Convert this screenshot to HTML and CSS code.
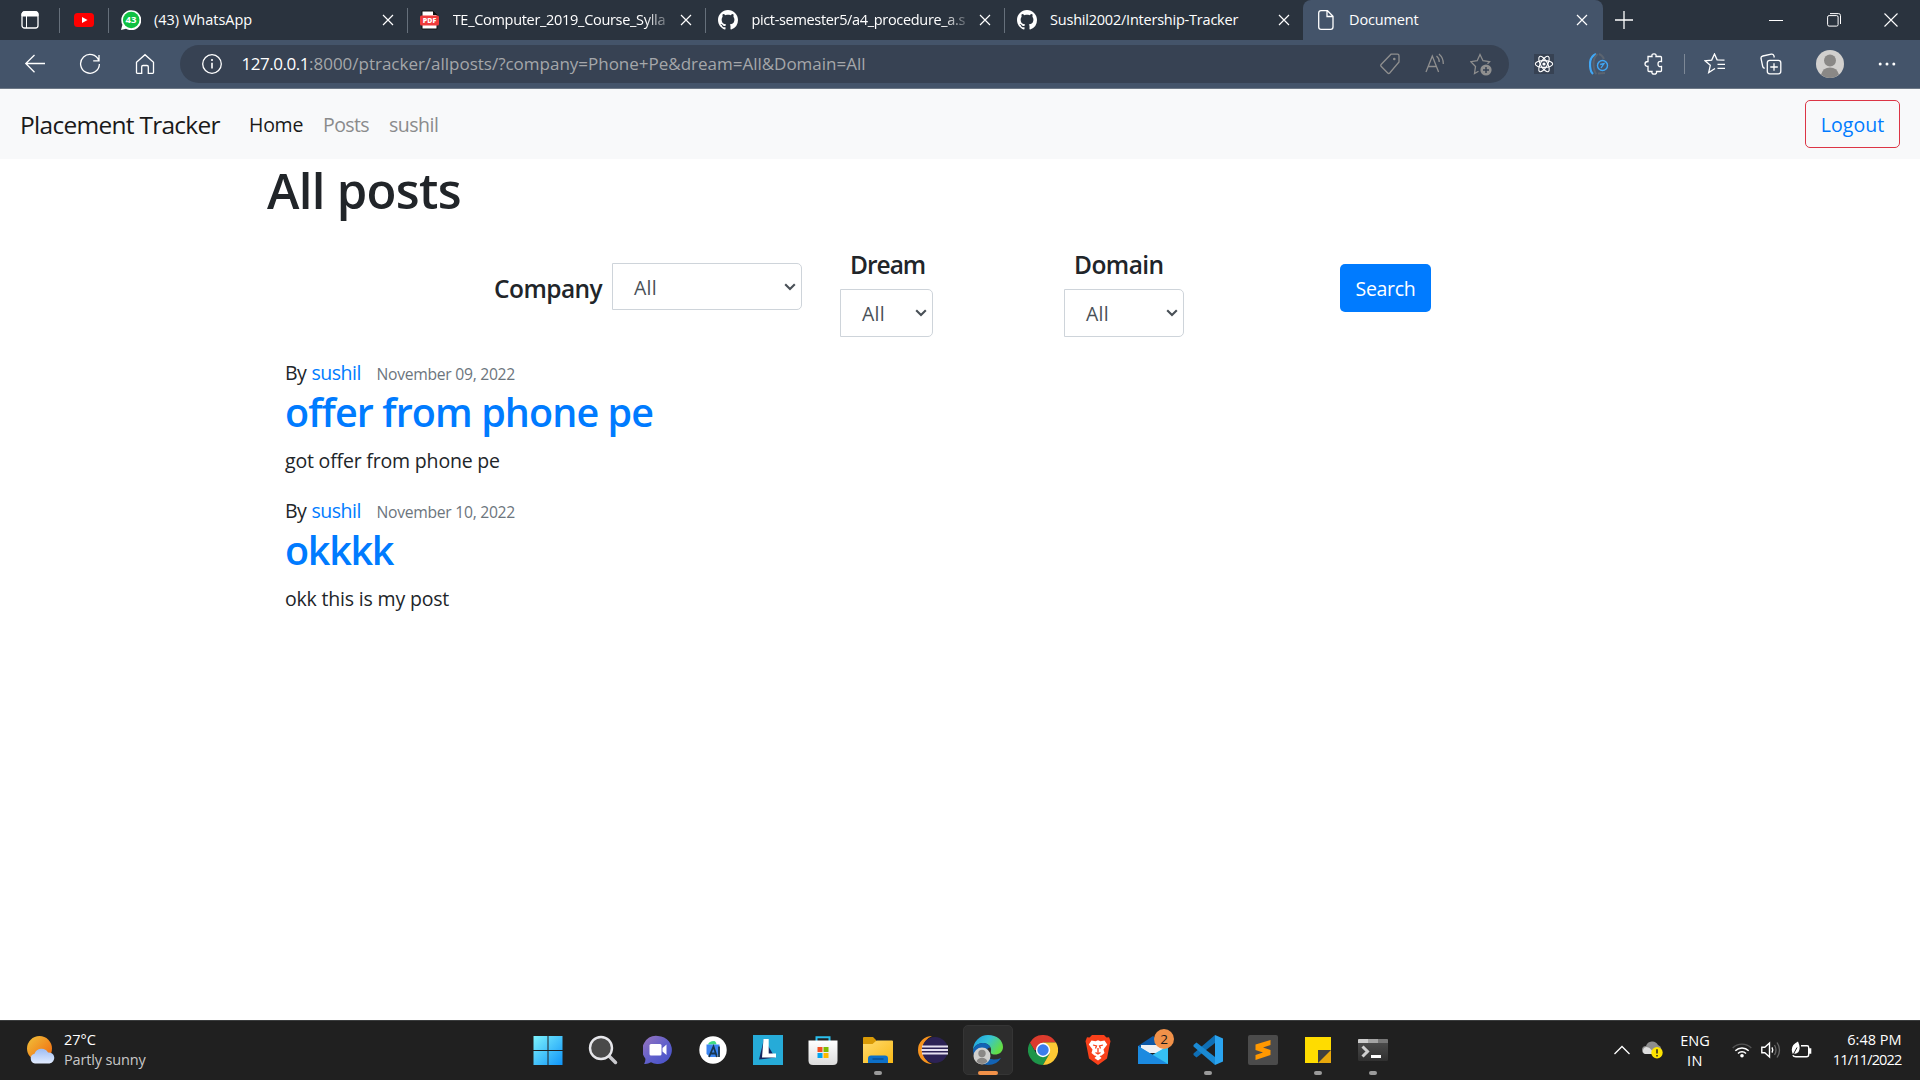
FILE: index.html
```html
<!DOCTYPE html>
<html lang="en">
<head>
<meta charset="utf-8">
<title>Document</title>
<link rel="stylesheet" href="styles.css">
</head>
<body>
<svg width="0" height="0" class="defs">
  <defs>
    <symbol id="x" viewBox="0 0 12 12"><path d="M1 1l10 10M11 1L1 11" stroke="#fff" stroke-width="1.2" fill="none"/></symbol>
    <symbol id="gh" viewBox="0 0 16 16"><path fill="#fff" d="M8 0C3.58 0 0 3.58 0 8c0 3.54 2.29 6.53 5.47 7.59.4.07.55-.17.55-.38 0-.19-.01-.82-.01-1.49-2.01.37-2.53-.49-2.69-.94-.09-.23-.48-.94-.82-1.13-.28-.15-.68-.52-.01-.53.63-.01 1.08.58 1.23.82.72 1.21 1.87.87 2.33.66.07-.52.28-.87.51-1.07-1.78-.2-3.64-.89-3.64-3.95 0-.87.31-1.59.82-2.15-.08-.2-.36-1.02.08-2.12 0 0 .67-.21 2.2.82.64-.18 1.32-.27 2-.27s1.36.09 2 .27c1.53-1.04 2.2-.82 2.2-.82.44 1.1.16 1.92.08 2.12.51.56.82 1.27.82 2.15 0 3.07-1.87 3.75-3.65 3.95.29.25.54.73.54 1.48 0 1.07-.01 1.93-.01 2.2 0 .21.15.46.55.38A8.01 8.01 0 0 0 16 8c0-4.42-3.58-8-8-8z"/></symbol>
    <symbol id="chev" viewBox="0 0 12 8"><path d="M1.2 1.2L6 6l4.800-4.800" stroke="#495057" stroke-width="2.100" fill="none"/></symbol>
    <linearGradient id="win" x1="0" y1="0" x2="1" y2="1"><stop offset="0" stop-color="#7df3fd"/><stop offset="1" stop-color="#0f94f8"/></linearGradient>
    <linearGradient id="sun" x1="0" y1="0" x2="1" y2="1"><stop offset="0" stop-color="#f0c23a"/><stop offset="1" stop-color="#f1620c"/></linearGradient>
    <linearGradient id="cloud" x1="0" y1="0" x2="0" y2="1"><stop offset="0" stop-color="#9dbcf2"/><stop offset="1" stop-color="#e2ecff"/></linearGradient>
    <linearGradient id="chat" x1="0" y1="0" x2="1" y2="1"><stop offset="0" stop-color="#9a75bd"/><stop offset=".55" stop-color="#5f5fcb"/><stop offset="1" stop-color="#4450c8"/></linearGradient>
    <linearGradient id="fold" x1="0" y1="0" x2="1" y2="1"><stop offset="0" stop-color="#ffda6c"/><stop offset="1" stop-color="#f9b916"/></linearGradient>
    <linearGradient id="edge" x1="0" y1="0" x2="1" y2=".5"><stop offset="0" stop-color="#1a9be0"/><stop offset=".5" stop-color="#35c3d8"/><stop offset="1" stop-color="#63dd45"/></linearGradient>
    <linearGradient id="bag" x1="0" y1="0" x2="0" y2="1"><stop offset="0" stop-color="#fff"/><stop offset="1" stop-color="#dcdcdc"/></linearGradient>
    <linearGradient id="term" x1="0" y1="0" x2="0" y2="1"><stop offset="0" stop-color="#505050"/><stop offset="1" stop-color="#303030"/></linearGradient>
  </defs>
</svg>

<header class="tabs">
  <div class="cell workspace"><svg width="20" height="20" viewBox="0 0 20 20"><rect x="2" y="2" width="16" height="16" rx="2.500" fill="none" stroke="#fff" stroke-width="1.300"/><path d="M2 6V4q0-2.500 2.500-2.500h11Q18 1.500 18 4v2zM6.500 6v12" fill="#fff" stroke="#fff"/></svg></div>
  <div class="cell pinned"><svg width="20" height="14" viewBox="0 0 20 14"><rect width="20" height="14" rx="3.500" fill="#f00"/><path d="M8 4l5.500 3L8 10z" fill="#fff"/></svg></div>
  <div class="tab">
    <svg class="fav" width="20" height="20" viewBox="0 0 20 20"><path d="M0 20L1.400 14.800A10 10 0 1 1 5 18.700z" fill="#fff"/><circle cx="10.200" cy="10" r="8.300" fill="#10c143"/><text x="10" y="13.300" text-anchor="middle" class="badge43">43</text></svg>
    <span class="title s-wa">(43) WhatsApp</span><svg class="close"><use href="#x"/></svg></div>
  <div class="tab">
    <svg class="fav" width="20" height="20" viewBox="0 0 20 20"><path d="M2 1h11l4 4v14H2z" fill="#fff" stroke="#111"/><path d="M13 1v4h4z" fill="#111"/><rect x="0" y="5.500" width="19" height="10" rx="1.500" fill="#ef3b3b"/><text x="9.500" y="13.300" text-anchor="middle" class="pdf">PDF</text></svg>
    <span class="title fade s-te">TE_Computer_2019_Course_Sylla</span><svg class="close"><use href="#x"/></svg></div>
  <div class="tab">
    <svg class="fav" width="20" height="20"><use href="#gh"/></svg>
    <span class="title fade s-pict">pict-semester5/a4_procedure_a.s</span><svg class="close"><use href="#x"/></svg></div>
  <div class="tab last">
    <svg class="fav" width="20" height="20"><use href="#gh"/></svg>
    <span class="title s-sus">Sushil2002/Intership-Tracker</span><svg class="close"><use href="#x"/></svg></div>
  <div class="tab active">
    <svg class="fav" width="20" height="20" viewBox="0 0 20 20"><path d="M5 .700h6.500L17 6.200V17q0 2.300-2.300 2.300H5Q2.700 19.300 2.700 17V3Q2.700 .700 5 .700zM11 1v5.500h6" fill="none" stroke="#fff" stroke-width="1.300"/></svg>
    <span class="title s-doc">Document</span><svg class="close"><use href="#x"/></svg></div>
  <svg class="plus" width="18" height="18" viewBox="0 0 18 18"><path d="M9 0v18M0 9h18" stroke="#fff" stroke-width="1.300"/></svg>
  <div class="winbtns">
    <svg width="14" height="14"><path d="M0 7.500h14" stroke="#fff"/></svg>
    <svg width="14" height="14" viewBox="0 0 14 14"><rect x=".600" y="2.600" width="10.500" height="10.500" rx="1.500" fill="none" stroke="#fff"/><path d="M3 .600h8.500q2 0 2 2V11" fill="none" stroke="#fff"/></svg>
    <svg width="14" height="14"><path d="M.500 .500l13 13M13.500 .500l-13 13" stroke="#fff" stroke-width="1.100"/></svg>
  </div>
</header>

<div class="toolbar">
  <div class="navbtns">
    <svg width="22" height="22" viewBox="0 0 22 22"><path d="M21 10.500H2M10.500 2L1.800 10.500l8.700 8.700"/></svg>
    <svg width="22" height="22" viewBox="0 0 22 22"><path d="M19.800 7.500A9.400 9.400 0 1 0 20.400 11M20 2v5.800h-5.800"/></svg>
    <svg width="22" height="22" viewBox="0 0 22 22"><path d="M2.500 9.200L11 1.700l8.500 7.500v10.300q0 .800-.800 .800h-4.400v-6.500q0-1.300-1.300-1.300h-4q-1.300 0-1.300 1.300v6.500H3.300q-.800 0-.800-.800z"/></svg>
  </div>
  <div class="address">
    <svg width="20" height="20" viewBox="0 0 20 20"><circle cx="10" cy="10" r="9.300"/><path d="M10 8.800v5.700M10 5v1.900" stroke-width="1.600"/></svg>
    <span class="url"><b class="s-host">127.0.0.1</b><span class="s-path">:8000/ptracker/allposts/?company=Phone+Pe&amp;dream=All&amp;Domain=All</span></span>
    <div class="inbar">
      <svg width="20" height="22" viewBox="0 0 20 22"><path d="M11 1.200h6.500q1.500 0 1.500 1.500V9L9.700 20q-1 1-2 0L1.300 13.500q-1-1-.200-2z"/><circle cx="14.300" cy="6" r="1.300" fill="#8f8f8f" stroke="none"/></svg>
      <svg width="20" height="22" viewBox="0 0 20 22"><path d="M1 19L7.300 3l6.300 16M3.300 13.500h8M11.500 3q3 2.500 2.700 6M14 1q4.500 4 4.300 10"/></svg>
      <svg width="22" height="24" viewBox="0 0 22 24"><path d="M8.500 19.300L4.500 21.500l1-7L.800 9.700l6.400-1L10 2.500l3 6.200 6.500 1-2 2"/><circle cx="16" cy="18" r="5.600" fill="#8f8f8f" stroke="none"/><path d="M16 15v6M13 18h6" stroke="#374253" stroke-width="1.500"/></svg>
    </div>
  </div>
  <div class="ext">
    <svg class="pad" width="20" height="20" viewBox="0 0 20 20"><rect width="20" height="20" fill="#374253" stroke="none"/><g stroke-width="1.100"><ellipse cx="10" cy="10" rx="8.700" ry="3.400"/><ellipse cx="10" cy="10" rx="8.700" ry="3.400" transform="rotate(60 10 10)"/><ellipse cx="10" cy="10" rx="8.700" ry="3.400" transform="rotate(120 10 10)"/></g><circle cx="10" cy="10" r="1.600" fill="#fff" stroke="none"/></svg>
    <svg class="pad" width="20" height="22" viewBox="0 0 20 22"><path d="M7 1Q1 3.500 1 11t3 10" stroke="#41a7f5" stroke-width="2.200"/><path d="M8.500 1Q4 5 4.500 12t3 9M10 1q3 1 5 5M9 20.500l7-.500" stroke="#5b6470" stroke-width="2"/><circle cx="13.500" cy="12.500" r="5" stroke="#41a7f5" stroke-width="1.400"/><path d="M12 15l3-4.500-3.800 1" stroke="#41a7f5"/></svg>
    <svg width="20" height="22" viewBox="0 0 20 22"><path d="M4 3.500h4Q7.500 .800 10 .800t2 2.700h4.500q1 0 1 1v4q-3.500-.800-3.500 2.500t3.500 2.500v4q0 1-1 1H12.500Q13 21.200 10.200 21.200T8 18.500H5q-1 0-1-1v-4.200Q1 13.500 1 11t3-2.500z"/></svg>
    <i class="vbar"></i>
    <svg width="22" height="22" viewBox="0 0 22 22"><path d="M11 15.500l-6.300 4 1.600-7.200L1 7.800l6.700-.700L10.500 1l2.600 5.800 7.400 .400M13.500 11.300H21M13.500 15.300H21"/></svg>
    <svg width="22" height="22" viewBox="0 0 22 22"><rect x="7.300" y="7.300" width="13.500" height="13.500" rx="2.500"/><path d="M14 10.300v7.500M10.300 14h7.500M4.700 15.300Q3 15 2.700 13.500L1 5.500Q.700 3.500 2.800 3l8.500-1.800q2-.300 2.600 1.500l.400 1.800"/></svg>
    <svg width="28" height="28" viewBox="0 0 28 28"><circle cx="14" cy="14" r="14" fill="#d2d0ce" stroke="none"/><circle cx="14" cy="10.500" r="6" fill="#8a8886" stroke="none"/><path d="M5 24.500q2-7 9-7t9 7q-4 3.500-9 3.500t-9-3.500z" fill="#8a8886" stroke="none"/></svg>
    <svg width="18" height="4" viewBox="0 0 18 4"><g fill="#fff" stroke="none"><circle cx="2.200" cy="2" r="1.500"/><circle cx="9" cy="2" r="1.500"/><circle cx="15.800" cy="2" r="1.500"/></g></svg>
  </div>
</div>

<nav class="navbar">
  <a class="brand">Placement Tracker</a>
  <a class="link on s-home">Home</a>
  <a class="link s-posts">Posts</a>
  <a class="link s-user">sushil</a>
  <a class="logout">Logout</a>
</nav>

<main class="page">
  <h1>All posts</h1>
  <form class="filters">
    <label class="s-comp">Company</label>
    <div class="select company"><span>All</span><svg width="12" height="8"><use href="#chev"/></svg></div>
    <div class="group dream"><label class="s-dream">Dream</label>
      <div class="select"><span>All</span><svg width="12" height="8"><use href="#chev"/></svg></div></div>
    <div class="group domain"><label class="s-dom">Domain</label>
      <div class="select"><span>All</span><svg width="12" height="8"><use href="#chev"/></svg></div></div>
    <div class="search">Search</div>
  </form>
  <article class="post">
    <div class="meta"><span class="by">By</span><a>sushil</a><small>November 09, 2022</small></div>
    <h2>offer from phone pe</h2>
    <p>got offer from phone pe</p>
  </article>
  <article class="post">
    <div class="meta"><span class="by">By</span><a>sushil</a><small>November 10, 2022</small></div>
    <h2 class="s-t2">okkkk</h2>
    <p>okk this is my post</p>
  </article>
</main>

<footer class="taskbar">
  <div class="weather">
    <svg width="30" height="30" viewBox="0 0 30 30"><circle cx="13.500" cy="13.500" r="12.500" fill="url(#sun)"/><path d="M9 28.500a5 5 0 0 1-.500-9.800A7.500 7.500 0 0 1 22 17.500a5.500 5.500 0 0 1 1.500 11z" fill="url(#cloud)"/></svg>
    <div><span>27°C</span><span class="dim">Partly sunny</span></div>
  </div>
  <div class="apps">
    <div class="app"><svg viewBox="0 0 30 30"><path d="M.500 1h14v14h-14zM15.500 1h14v14h-14zM.500 16h14v14h-14zM15.500 16h14v14h-14z" fill="url(#win)"/></svg></div>
    <div class="app"><svg viewBox="0 0 30 30"><path d="M20 20l7.500 7.500" stroke="#c9c9cd" stroke-width="3.500" stroke-linecap="round"/><circle cx="13" cy="13" r="11" fill="#4a4a4a" stroke="#e6e6ea" stroke-width="2.400"/></svg></div>
    <div class="app"><svg viewBox="0 0 30 30"><path d="M15 1a14 14 0 1 1-7 26.200Q4 29.500 1 28.800q1.800-2 1.300-5.300A14 14 0 0 1 15 1z" fill="url(#chat)"/><rect x="6.500" y="9" width="12" height="11.500" rx="1.500" fill="#fff"/><path d="M19.500 13l4-3.500v10.500l-4-3.500z" fill="#fff"/></svg></div>
    <div class="app"><svg viewBox="0 0 30 30"><circle cx="15" cy="15" r="13.700" fill="#fff"/><path d="M10 9.500q1-3.500 6-3.500 2 0 2.500 3.500z" fill="#3ddc84"/><path d="M8.500 9.500h13v9L18 22H12l-3.500-3z" fill="#3b85f0"/><path d="M11 22l4.500-10.500L19 22M13 18.500h5M21 11.500V22" stroke="#17364f" stroke-width="1.800" fill="none"/></svg></div>
    <div class="app"><svg viewBox="0 0 30 30"><path d="M0 0h30v30H0z" fill="#26abd8"/><path d="M11 4L6 24.500l16-2z" fill="#14245e"/><path d="M10.500 4h5.200v14.500H23v4H9z" fill="#fff"/></svg></div>
    <div class="app"><svg viewBox="0 0 30 30"><path d="M8.500 7V2.200h13V7" stroke="#2bc0ee" stroke-width="2" fill="none"/><path d="M.500 5.500h29v20q0 4.500-4.500 4.500H5Q.500 30 .500 25.500z" fill="url(#bag)"/><path d="M9.500 12h5v5h-5z" fill="#f25022"/><path d="M15.500 12h5v5h-5z" fill="#7fba00"/><path d="M9.500 18h5v5h-5z" fill="#00a4ef"/><path d="M15.500 18h5v5h-5z" fill="#ffb900"/></svg></div>
    <div class="app run"><svg viewBox="0 0 30 30"><path d="M0 3q0-1 1-1h9l3 3v6H0z" fill="#d99a06"/><path d="M0 9h9.500l4-3.500H29q1 0 1 1V28H0z" fill="url(#fold)"/><path d="M5 28v-4.500Q5 20.500 8 20.500h14q3 0 3 3V28z" fill="#0d70c8"/><path d="M9.500 24h11" stroke="#0a4f94" stroke-width="1.500"/></svg></div>
    <div class="app"><svg viewBox="0 0 30 30"><path d="M14 1A13.500 13.500 0 0 0 14 29 15 15 0 0 1 14 1z" fill="#f7941e"/><circle cx="17" cy="15" r="13" fill="#2c2255"/><path d="M4 11.500h26M3.500 15h26.500M4 18.500h26" stroke="#e5e0f0" stroke-width="1.900"/></svg></div>
    <div class="app run current"><svg viewBox="0 0 30 30"><path d="M0 15A15 15 0 0 1 15 0c9 0 15 5.500 15 12 0 5-4 7.500-8 7.500-4 0-4.500-1.500-4-3.500C19 11 14 8 10 8S2 10 0 15z" fill="url(#edge)"/><path d="M0 15Q3 7.500 10.500 8q5.500 .500 7 4.500-4 0-4.500 5 .500 6.500 8 7 3.500 0 7-1.500Q24 30 15 30 1 29 0 15z" fill="#1263b5"/><circle cx="9" cy="21" r="8.500" fill="#d0cfcd"/><circle cx="9" cy="18.500" r="3.700" fill="#8a8886"/><path d="M3.500 26.500Q5 22.800 9 22.800t5.500 3.700Q12 29 9 29t-5.500-2.500z" fill="#8a8886"/></svg></div>
    <div class="app"><svg viewBox="0 0 30 30"><path d="M28 7.500H15L8.500 18.750 2 7.500A15 15 0 0 0 15 30l6.500-11.250z" fill="#1e9549"/><path d="M2 7.500A15 15 0 0 1 28 7.500H15v7.500H6.500z" fill="#db3b2d"/><path d="M28 7.500H15l6.500 11.250L15 30A15 15 0 0 0 28 7.500z" fill="#fcc934"/><circle cx="15" cy="15" r="7.200" fill="#fff"/><circle cx="15" cy="15" r="5.700" fill="#3b7ded"/></svg></div>
    <div class="app"><svg viewBox="0 0 30 30"><path d="M9 0h12l2.500 2.500 2.500-.300 1.500 4-.700 3L24 23.500 15 30 6 23.500 3.200 9.200l-.700-3 1.500-4 2.500 .300z" fill="#f9401a"/><path d="M8.500 5.500l4 .700 2.500-.900 2.500 .900 4-.700 2.700 4-3.700 5 1 3.500-3 2.500-2 .500 2 2L15 25.500 11.500 23l2-2-2-.500-3-2.500 1-3.500-3.700-5z" fill="#fff"/><path d="M10 10l3.500 1-1 2.500M20 10l-3.500 1 1 2.500M12.500 17.500L15 19l2.500-1.500M15 13v5" stroke="#f9401a" stroke-width="1.300" fill="none"/></svg></div>
    <div class="app"><svg viewBox="0 0 30 30"><path d="M0 11L15 1l15 10v6H0z" fill="#0c59a8"/><path d="M3 10h24v8H3z" fill="#eef1f5"/><path d="M0 11l15 9.500L30 11v18H0z" fill="#2ba6ea"/><path d="M0 29l15-9.500L30 11v18z" fill="#35c0f2"/><path d="M0 29V11l30 18z" fill="#1b8ae0"/></svg><span class="count">2</span></div>
    <div class="app run"><svg viewBox="0 0 30 30"><path d="M22 0v8L3.500 22.500 .500 20v-1.500z" fill="#0f6fb5"/><path d="M22 30v-8L3.500 7.500 .500 10v1.500z" fill="#1a8ad4"/><path d="M22 0l8 3.500v23L22 30z" fill="#2aa4f0"/></svg></div>
    <div class="app"><svg viewBox="0 0 30 30"><rect width="30" height="30" rx="2" fill="#4b4b4b"/><path d="M7.500 9.500l15-4.500v5l-7.500 2.500 7.500 2.500v5l-15 5v-5l7.500-2.500-7.500-2.500z" fill="#ff9800"/></svg></div>
    <div class="app run"><svg viewBox="0 0 30 30"><path d="M2 2h26v14L15 28H2z" fill="#ffdc00"/><path d="M15 28V15h13v13z" fill="#e8a80c"/><path d="M15 28V15h13z" fill="#3f3f3f"/></svg></div>
    <div class="app run"><svg viewBox="0 0 30 30"><rect y="4" width="30" height="22" rx="1.500" fill="url(#term)"/><path d="M0 8V5q0-1 1-1h9v4z" fill="#ccc"/><path d="M10 4h10v4H10z" fill="#a4a4a4"/><path d="M20 4h9q1 0 1 1v3H20z" fill="#777"/><path d="M4.500 11.500l5 5-5 5" stroke="#d0d0d0" stroke-width="3" fill="none"/><path d="M13 21.500h10" stroke="#fff" stroke-width="3"/></svg></div>
  </div>
  <div class="tray">
    <svg width="16" height="10" viewBox="0 0 16 10"><path d="M.500 9L8 1.500 15.500 9" stroke="#fff" stroke-width="1.300" fill="none"/></svg>
    <svg class="onedrive" width="21" height="18" viewBox="0 0 21 18"><path d="M4 13a4 4 0 0 1 0-8 6.500 6.500 0 0 1 12-1 5 5 0 0 1 1 9z" fill="#8d8d8d"/><path d="M3 13a3.700 3.700 0 0 1 1.500-7q3 0 5 3l3 4z" fill="#dedede"/><circle cx="15" cy="11.800" r="5.700" fill="#fde300"/><path d="M15 8.300v4.300M15 14v1.500" stroke="#222" stroke-width="1.500"/></svg>
    <div class="lang"><span>ENG</span><span class="s-in">IN</span></div>
    <svg width="20" height="16" viewBox="0 0 20 16" fill="none"><path d="M.700 6a13 13 0 0 1 18.600 0" stroke="#555" stroke-width="1.400"/><path d="M3.300 8.800a9.500 9.500 0 0 1 13.400 0M6 11.500a5.700 5.700 0 0 1 8 0" stroke="#fff" stroke-width="1.500"/><circle cx="10" cy="13.700" r="1.800" fill="#fff"/></svg>
    <svg width="20" height="18" viewBox="0 0 20 18" fill="none"><path d="M.800 6.200h3L8.500 2v14l-4.700-4.200h-3z" stroke="#fff" stroke-width="1.400"/><path d="M11 6.300q1.500 2.700 0 5.400" stroke="#fff" stroke-width="1.400"/><path d="M13.500 4q3 5 0 10M16 1.500q5 7.500 0 15" stroke="#666" stroke-width="1.300"/></svg>
    <svg width="21" height="18" viewBox="0 0 21 18" fill="none"><path d="M10 4.700h6q1.700 0 1.700 1.700v7q0 2.300-2.200 2.300H5q-2.500 0-3.200-1.500M18.300 8v4h1.300V8z" stroke="#fff" stroke-width="1.400"/><path d="M2 13.500Q-2 5 7 .500 10 7 7.500 11 5 13.500 3 12.500z" fill="#fff"/><path d="M2 14l4-7.500" stroke="#202020"/></svg>
    <div class="clock"><span>6:48 PM</span><span class="s-day">11/11/2022</span></div>
  </div>
</footer>
</body>
</html>
```
FILE: styles.css
```css
* { box-sizing: border-box; }
body {
  margin: 0;
  width: 1920px;
  height: 1080px;
  overflow: hidden;
  display: flex;
  flex-direction: column;
  background: #fff;
  color: #212529;
  font-family: "Open Sans", "Noto Sans", sans-serif;
  font-size: 19.5px;
}
svg { display: block; flex: none; }
.defs { position: absolute; }
span, a, label, small, b { white-space: nowrap; }

/* browser tabs */
.tabs { display: flex; align-items: center; height: 40px; flex: none; background: #2a333e; color: #fff; font-size: 14.5px; }
.cell { display: flex; align-items: center; justify-content: center; height: 25px; border-right: 1px solid #66707b; }
.workspace { width: 60px; }
.pinned { width: 49px; padding-right: 1px; }
.tab { width: 298.700px; height: 25px; display: flex; align-items: center; border-right: 1px solid #66707b; padding: 0 13px 0 12px; }
.tab.last { border-right: 0; width: 298px; }
.tab.active { width: 300px; height: 40px; background: #44546a; border: 0; border-radius: 8px 8px 0 0; padding: 0 15px 0 13px; }
.fav { margin-right: 13px; }
.title { width: 219px; line-height: 20px; margin-right: auto; flex: none; }
.s-te { letter-spacing: -.3px; }
.s-pict { letter-spacing: -.33px; }
.s-sus { letter-spacing: -.22px; }
.s-doc { letter-spacing: -.15px; }
.tab .close { width: 12px; height: 12px; }
.fade { -webkit-mask-image: linear-gradient(90deg, #000 88%, transparent 101%); mask-image: linear-gradient(90deg, #000 88%, transparent 101%); }
.badge43 { font: 700 9.500px "Open Sans", sans-serif; fill: #fff; }
.pdf { font: 800 7px "Open Sans", sans-serif; fill: #fff; }
.plus { margin-left: 12px; margin-right: auto; }
.winbtns { display: flex; gap: 43.500px; padding-right: 22px; }

/* address row */
.toolbar { display: flex; align-items: center; height: 49px; flex: none; background: #44546a; border-bottom: 1px solid #6d7886; }
.toolbar svg { fill: none; stroke: #fff; stroke-width: 1.300; }
.navbtns { display: flex; gap: 33px; width: 180px; padding-left: 24px; }
.address { display: flex; align-items: center; width: 1329px; height: 38px; border-radius: 19px; background: #374253; padding: 0 17px 0 22px; }
.url { margin-left: 19.500px; font-size: 17px; line-height: 38px; color: #a5a7aa; display: flex; }
.url b { font-weight: 400; color: #fff; letter-spacing: -.47px; }
.s-path { letter-spacing: -.01px; }
.inbar { display: flex; align-items: center; gap: 25px; margin-left: auto; }
.toolbar .inbar svg { stroke: #8f8f8f; }
.ext { display: flex; align-items: center; flex: 1; gap: 34px; padding-left: 25px; }
.ext .pad { margin-right: 1px; }
.vbar { width: 1px; height: 20px; background: #7d8896; margin: 0 -14.500px; }

/* site navbar */
.navbar { display: flex; align-items: center; height: 70px; flex: none; background: #f8f9fa; padding: 2px 20px 0; }
.brand { width: 229px; font-size: 24.500px; line-height: 34px; color: #1a1a1a; letter-spacing: -.72px; }
.link { color: #8a8b8c; line-height: 30px; width: 74px; }
.link.s-home { letter-spacing: -.25px; }
.link.s-posts { width: 66px; letter-spacing: -.6px; }
.link.s-user { letter-spacing: -.5px; }
.link.on { color: #1a1a1a; }
.logout { margin: -3px 0 0 auto; width: 95px; height: 48px; border: 1px solid #dc3545; border-radius: 5px; color: #007bff; display: flex; align-items: center; justify-content: center; padding-top: 2px; letter-spacing: .1px; }

/* posts page */
.page { flex: 1; padding: 1px 0 0 267px; }
h1 { margin: 0 0 30px; font-size: 49px; font-weight: 600; line-height: 60px; letter-spacing: -.67px; }
.filters { display: flex; align-items: flex-start; height: 88px; padding-left: 227px; margin-bottom: 20px; }
label { font-size: 24.500px; line-height: 30px; font-weight: 600; }
.s-comp { letter-spacing: -.55px; }
.s-dream { letter-spacing: -1px; }
.s-dom { letter-spacing: -.55px; }
.filters > label { margin-top: 24px; width: 118px; }
.select { display: flex; align-items: center; justify-content: space-between; height: 48px; border: 1px solid #ced4da; border-radius: 0 5px 5px 0; padding: 0 5px 0 21px; color: #495057; letter-spacing: .27px; }
.select.company { width: 190px; height: 47px; margin-top: 13px; }
.select.company span { padding-top: 1px; }
.group { display: flex; flex-direction: column; gap: 9px; }
.group label { padding-left: 10px; }
.dream { width: 93px; margin-left: 38px; }
.domain { width: 120px; margin-left: 131px; }
.search { margin: 14px 0 0 156px; width: 91px; height: 48px; border-radius: 5px; background: #007bff; color: #fff; display: flex; align-items: center; justify-content: center; letter-spacing: -.29px; }
.post { margin: 0 0 20px 18px; }
.meta { display: flex; align-items: baseline; height: 30px; line-height: 30px; }
.meta a { color: #007bff; width: 65px; letter-spacing: -.5px; }
.by { width: 26.500px; letter-spacing: -.69px; }
small { font-size: 15.700px; color: #6c757d; letter-spacing: -.28px; }
h2 { margin: 0 0 10px; font-size: 39.500px; font-weight: 600; line-height: 48px; color: #007bff; letter-spacing: -.91px; }
h2.s-t2 { letter-spacing: -1.300px; }
p { margin: 0; line-height: 30px; letter-spacing: -.18px; }

/* taskbar */
.taskbar { display: flex; align-items: center; height: 60px; flex: none; background: #202020; border-top: 1px solid #3a3c3d; color: #fff; font-size: 14.500px; line-height: 20px; padding-bottom: 2px; }
.weather { width: 523px; display: flex; gap: 8px; padding-left: 26px; align-items: center; }
.weather div, .lang, .clock { display: flex; flex-direction: column; }
.dim { color: #c8c8c8; letter-spacing: -.15px; }
.apps { display: flex; gap: 5px; width: 876px; }
.app { position: relative; width: 50px; height: 50px; display: flex; align-items: center; justify-content: center; }
.app svg { width: 30px; height: 30px; }
.current { background: #2d2d2d; border: 1px solid #353535; border-radius: 5px; }
.run::after { content: ""; position: absolute; left: 50%; bottom: 0; width: 8px; height: 4px; margin-left: -4px; border-radius: 2px; background: #9a9a9a; }
.current::after { width: 20px; margin-left: -10px; bottom: -1px; background: #f19149; }
.count { position: absolute; right: 4px; top: 4px; width: 20px; height: 20px; border-radius: 50%; background: #f19149; color: #1a1a1a; text-align: center; line-height: 20px; font-size: 13.500px; }
.tray { flex: 1; display: flex; align-items: center; padding: 0 18.500px 0 215px; }
.onedrive { margin-left: 12px; }
.lang { width: 40px; margin: 2px 17px 0 12px; align-items: center; }
.s-in { letter-spacing: .5px; }
.tray .lang + svg { margin-right: 9px; }
.tray .lang + svg + svg { margin-right: 10px; }
.clock { margin-left: auto; align-items: flex-end; }
.s-day { letter-spacing: -.83px; }
```
